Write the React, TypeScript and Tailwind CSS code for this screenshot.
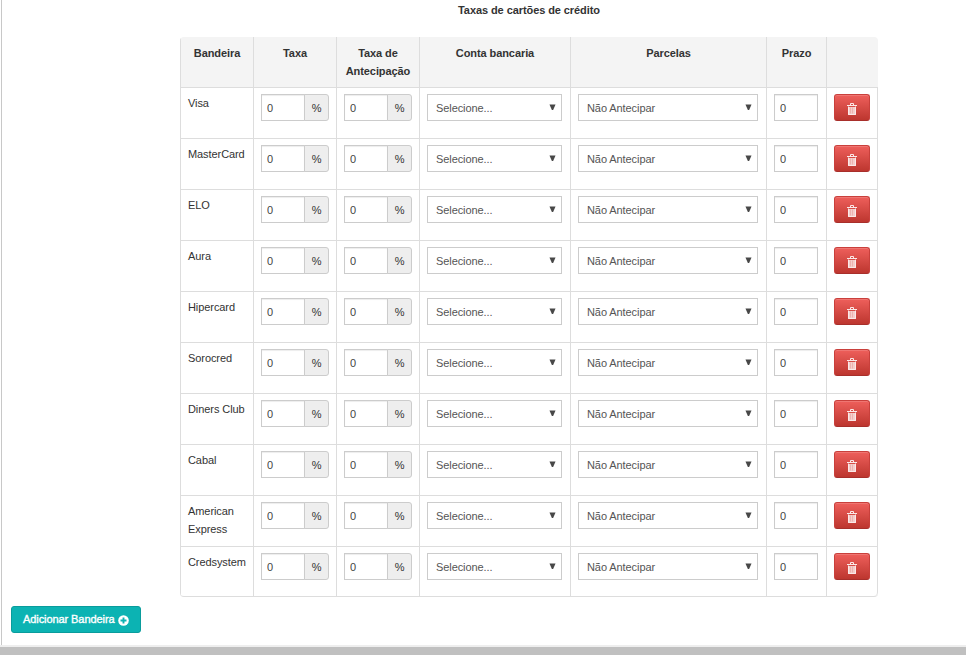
import React from "react";

const brands = [
  "Visa",
  "MasterCard",
  "ELO",
  "Aura",
  "Hipercard",
  "Sorocred",
  "Diners Club",
  "Cabal",
  "American Express",
  "Credsystem",
];

const headers = ["Bandeira", "Taxa", "Taxa de Antecipação", "Conta bancaria", "Parcelas", "Prazo", ""];

const columns = "grid grid-cols-[73px_83px_83px_151px_196px_60px_51px]";
const cell = "border-l border-t border-[#dddddd] pt-[6px] pl-[7px]";
const field =
  "h-[27px] border border-[#cccccc] bg-white text-[11px] text-[#444444] shadow-[inset_0_1px_1px_rgba(0,0,0,0.075)] outline-none";

function PercentField() {
  return (
    <div className="flex">
      <input className={`${field} w-[44px] pl-[5px]`} defaultValue="0" />
      <span className="-ml-px flex h-[27px] w-[25px] items-center justify-center rounded-r-[3px] border border-[#cccccc] bg-[#eeeeee] text-[11px] text-[#333333]">
        %
      </span>
    </div>
  );
}

function SelectField({ label, width }: { label: string; width: string }) {
  return (
    <button
      className={`flex h-[27px] items-center justify-between border border-[#cccccc] bg-white pl-[8px] pr-[5px] text-[11px] text-[#555555] ${width}`}
    >
      <span>{label}</span>
      <svg width="7" height="7" viewBox="0 0 7 7" className="mb-[1px]">
        <path d="M0.5 0.5h6L4.1 6H2.9z" fill="#484848" />
      </svg>
    </button>
  );
}

function DeleteButton() {
  return (
    <button className="flex h-[27px] w-[36px] items-center justify-center rounded-[3px] border border-[#c9403c] border-b-[#a82f2b] bg-linear-to-b from-[#ee5f5b] to-[#bd362f] pt-[2px] shadow-[inset_0_1px_0_rgba(255,255,255,0.15)]">
      <svg width="10" height="12" viewBox="0 0 10 12" fill="none">
        <path d="M3.5 2V0.5h3V2" stroke="#fbe9e8" />
        <path d="M0 2.5h10" stroke="#fbe9e8" />
        <path d="M1 4h8v8H1z" fill="#f4cfcd" />
        <path d="M1.5 3.5v8h7v-8" stroke="#fbe9e8" />
        <path d="M3.5 4.5v6M5.5 4.5v6" stroke="#e9a5a2" strokeWidth="0.7" />
      </svg>
    </button>
  );
}

export default function App() {
  return (
    <div className="flex h-[655px] w-[966px] flex-col overflow-hidden bg-white font-['Liberation_Sans',Arial,sans-serif] text-[11px] leading-[18px] tracking-[-0.08px] text-[#333333]">
      <main className="ml-px h-[645px] border-l border-[#c8c8c8]">
        <h1 className="ml-[178px] h-[36px] w-[698px] pt-px text-center text-[11px] font-bold leading-[18px]">
          Taxas de cartões de crédito
        </h1>
        <section className="ml-[178px] mt-px w-[698px] overflow-hidden rounded-[4px] border-b border-[#dddddd]">
          <div className={`${columns} h-[50px] bg-[#f4f4f4] text-center font-bold`}>
            {headers.map((title, i) => (
              <div key={i} className="border-l border-[#dddddd] px-[7px] pt-[7px]">
                {title}
              </div>
            ))}
          </div>
          <div className="rounded-b-[4px] border-r border-[#dddddd]">
            {brands.map((brand) => (
              <div key={brand} className={`${columns} h-[51px] last:h-[50px]`}>
                <div className={cell}>{brand}</div>
                <div className={cell}>
                  <PercentField />
                </div>
                <div className={cell}>
                  <PercentField />
                </div>
                <div className={cell}>
                  <SelectField label="Selecione..." width="w-[135px]" />
                </div>
                <div className={cell}>
                  <SelectField label="Não Antecipar" width="w-[180px]" />
                </div>
                <div className={cell}>
                  <input className={`${field} w-[44px] pl-[5px]`} defaultValue="0" />
                </div>
                <div className={cell}>
                  <DeleteButton />
                </div>
              </div>
            ))}
          </div>
        </section>
        <button className="ml-[9px] mt-[9px] flex h-[27px] w-[130px] items-center rounded-[3px] border border-[#0a9c9c] bg-[#0cb3b3] pl-[11px] text-[11px] text-white">
          <span className="-mt-px w-[91px] whitespace-nowrap text-left [-webkit-text-stroke:0.35px_#ffffff]">
            Adicionar Bandeira
          </span>
          <svg width="11" height="11" viewBox="0 0 11 11" className="ml-[4px] mt-[2px]">
            <circle cx="5.5" cy="5.5" r="5.3" fill="#ffffff" />
            <path d="M5.5 2.5v6M2.5 5.5h6" stroke="#0cb3b3" strokeWidth="1.9" />
          </svg>
        </button>
      </main>
      <div className="h-[2px] bg-[#eeeeee]" />
      <div className="h-[8px] bg-[#c0c0c0]" />
    </div>
  );
}
